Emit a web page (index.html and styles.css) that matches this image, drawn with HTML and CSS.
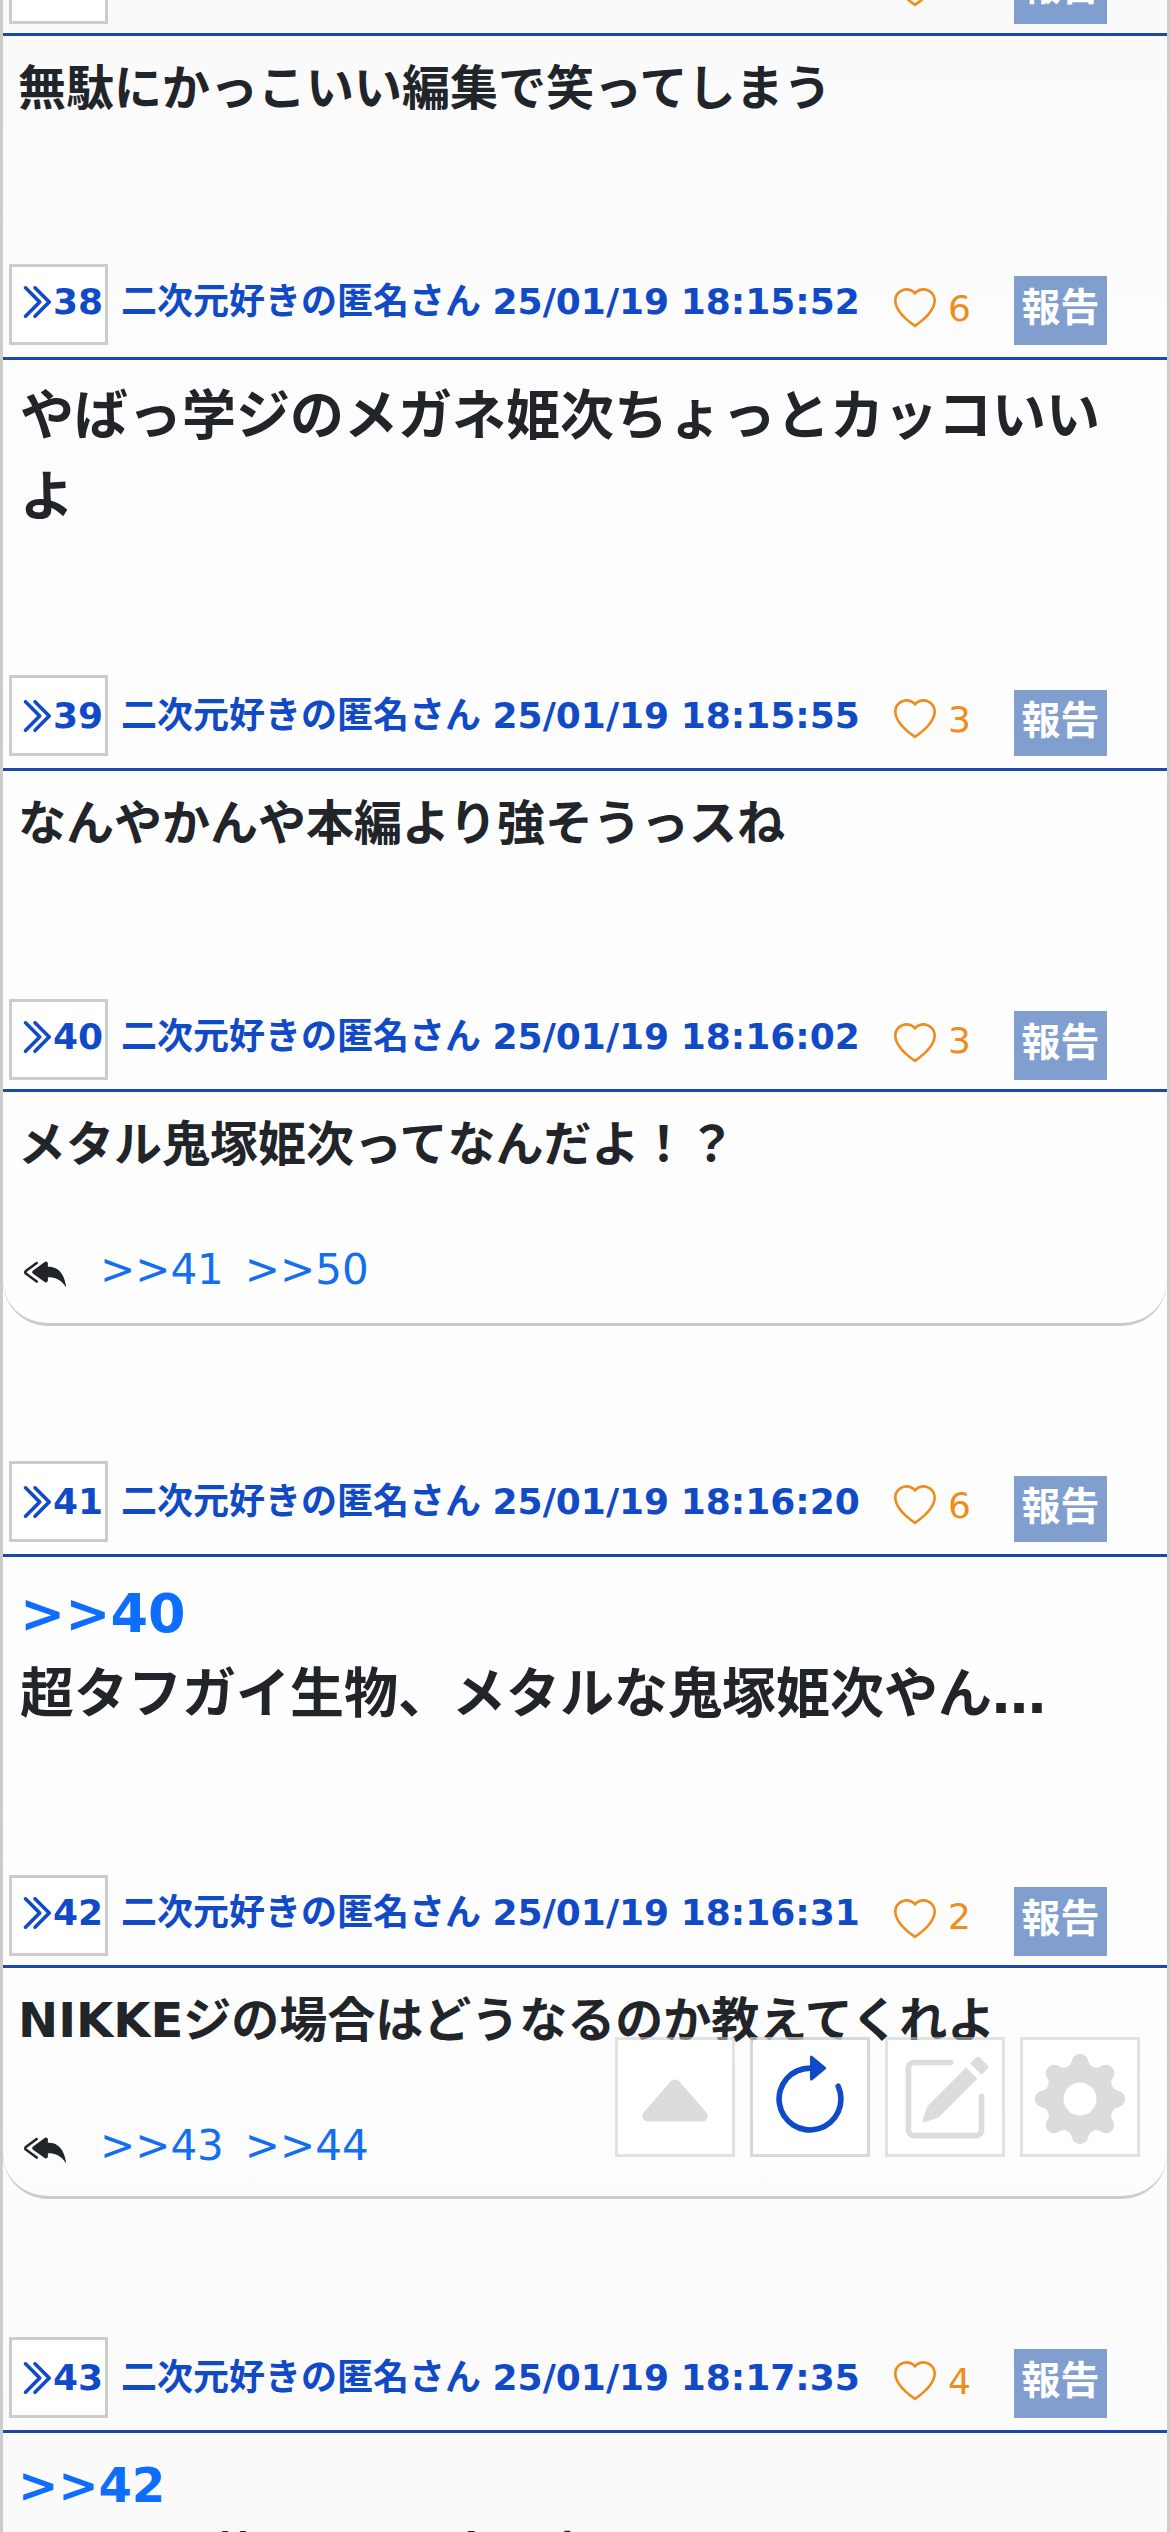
FILE: index.html
```html
<!DOCTYPE html>
<html lang="ja">
<head>
<meta charset="utf-8">
<title>スレッド</title>
<link rel="stylesheet" href="styles.css">
</head>
<body>
<svg class="sprite" aria-hidden="true">
  <symbol id="chevrons" viewBox="0 0 16 16"><path d="M3.646 1.646a.5.5 0 0 1 .708 0l6 6a.5.5 0 0 1 0 .708l-6 6a.5.5 0 0 1-.708-.708L9.293 8 3.646 2.354a.5.5 0 0 1 0-.708z"/><path d="M7.646 1.646a.5.5 0 0 1 .708 0l6 6a.5.5 0 0 1 0 .708l-6 6a.5.5 0 0 1-.708-.708L13.293 8 7.646 2.354a.5.5 0 0 1 0-.708z"/></symbol>
  <symbol id="heart" viewBox="0 0 16 16"><path d="m8 2.748-.717-.737C5.6.281 2.514.878 1.4 3.053c-.523 1.023-.641 2.5.314 4.385.92 1.815 2.834 3.989 6.286 6.357 3.452-2.368 5.365-4.542 6.286-6.357.955-1.886.838-3.362.314-4.385C13.486.878 10.4.28 8.717 2.01L8 2.748zM8 15C-7.333 4.868 3.279-3.04 7.824 1.143c.06.055.119.112.176.171a3.12 3.12 0 0 1 .176-.17C12.72-3.042 23.333 4.867 8 15z"/></symbol>
  <symbol id="reply" viewBox="0 0 16 16"><path d="M8.021 11.9 3.453 8.62a.719.719 0 0 1 0-1.238L8.021 4.1a.716.716 0 0 1 1.079.619V6c1.5 0 6 0 7 8-2.5-4.5-7-4-7-4v1.281c0 .56-.606.898-1.079.62z"/><path d="M5.232 4.293a.5.5 0 0 1-.106.7L1.114 7.945a.5.5 0 0 1-.042.028.147.147 0 0 0 0 .252.503.503 0 0 1 .042.028l4.012 2.954a.5.5 0 1 1-.593.805L.539 9.073a1.147 1.147 0 0 1 0-1.946l3.994-2.94a.5.5 0 0 1 .699.106z"/></symbol>
</svg>
<main class="thread">
  <article class="post">
    <header class="head compact">
      <a class="num"><svg><use href="#chevrons"/></svg>37</a>
      <span class="meta"></span>
      <span class="like"><svg><use href="#heart"/></svg></span>
      <span class="report">報告</span>
    </header>
    <p class="body">無駄にかっこいい編集で笑ってしまう</p>
  </article>
  <article class="post">
    <header class="head raised">
      <a class="num"><svg><use href="#chevrons"/></svg>38</a>
      <span class="meta">二次元好きの匿名さん 25/01/19 18:15:52</span>
      <span class="like"><svg><use href="#heart"/></svg>6</span>
      <span class="report">報告</span>
    </header>
    <p class="body large h315">やばっ学ジのメガネ姫次ちょっとカッコいいよ</p>
  </article>
  <article class="post">
    <header class="head short">
      <a class="num"><svg><use href="#chevrons"/></svg>39</a>
      <span class="meta">二次元好きの匿名さん 25/01/19 18:15:55</span>
      <span class="like"><svg><use href="#heart"/></svg>3</span>
      <span class="report">報告</span>
    </header>
    <p class="body">なんやかんや本編より強そうっスね</p>
  </article>
  <article class="post">
    <header class="head compact">
      <a class="num"><svg><use href="#chevrons"/></svg>40</a>
      <span class="meta">二次元好きの匿名さん 25/01/19 18:16:02</span>
      <span class="like"><svg><use href="#heart"/></svg>3</span>
      <span class="report">報告</span>
    </header>
    <div class="body card h234">
      <p>メタル鬼塚姫次ってなんだよ！？</p>
      <div class="replies"><svg><use href="#reply"/></svg><a>&gt;&gt;41</a><a>&gt;&gt;50</a></div>
    </div>
  </article>
  <article class="post">
    <header class="head short">
      <a class="num"><svg><use href="#chevrons"/></svg>41</a>
      <span class="meta">二次元好きの匿名さん 25/01/19 18:16:20</span>
      <span class="like"><svg><use href="#heart"/></svg>6</span>
      <span class="report">報告</span>
    </header>
    <p class="body large h318"><a>&gt;&gt;40</a><br>超タフガイ生物、メタルな鬼塚姫次やん…</p>
  </article>
  <article class="post">
    <header class="head compact">
      <a class="num"><svg><use href="#chevrons"/></svg>42</a>
      <span class="meta">二次元好きの匿名さん 25/01/19 18:16:31</span>
      <span class="like"><svg><use href="#heart"/></svg>2</span>
      <span class="report">報告</span>
    </header>
    <div class="body card h231">
      <p>NIKKEジの場合はどうなるのか教えてくれよ</p>
      <div class="replies"><svg><use href="#reply"/></svg><a>&gt;&gt;43</a><a>&gt;&gt;44</a></div>
    </div>
  </article>
  <article class="post">
    <header class="head">
      <a class="num"><svg><use href="#chevrons"/></svg>43</a>
      <span class="meta">二次元好きの匿名さん 25/01/19 18:17:35</span>
      <span class="like"><svg><use href="#heart"/></svg>4</span>
      <span class="report">報告</span>
    </header>
    <p class="body last"><a>&gt;&gt;42</a><br>これには革ジャン似合う方も</p>
  </article>
</main>
<nav class="tools">
  <button class="tool"><svg viewBox="0 0 16 16"><path d="m7.247 4.86-4.796 5.481c-.566.647-.106 1.659.753 1.659h9.592a1 1 0 0 0 .753-1.659l-4.796-5.48a1 1 0 0 0-1.506 0z"/></svg></button>
  <button class="tool active"><svg viewBox="0 0 16 16"><path d="M8 3a5 5 0 1 0 4.546 2.914.5.5 0 0 1 .908-.417A6 6 0 1 1 8 2v1z"/><path d="M8 4.466V.534a.25.25 0 0 1 .41-.192l2.36 1.966c.12.1.12.284 0 .384L8.41 4.658A.25.25 0 0 1 8 4.466z"/></svg></button>
  <button class="tool"><svg viewBox="0 0 16 16"><path d="M15.502 1.94a.5.5 0 0 1 0 .706L14.459 3.69l-2-2L13.502.646a.5.5 0 0 1 .707 0l1.293 1.293zm-1.75 2.456-2-2L4.939 9.21a.5.5 0 0 0-.121.196l-.805 2.414a.25.25 0 0 0 .316.316l2.414-.805a.5.5 0 0 0 .196-.12l6.813-6.814z"/><path d="M1 13.5A1.5 1.5 0 0 0 2.5 15h11a1.5 1.5 0 0 0 1.5-1.5v-6a.5.5 0 0 0-1 0v6a.5.5 0 0 1-.5.5h-11a.5.5 0 0 1-.5-.5v-11a.5.5 0 0 1 .5-.5H9a.5.5 0 0 0 0-1H2.5A1.5 1.5 0 0 0 1 2.5v11z"/></svg></button>
  <button class="tool"><svg viewBox="0 0 16 16"><path d="M9.405 1.05c-.413-1.4-2.397-1.4-2.81 0l-.1.34a1.464 1.464 0 0 1-2.105.872l-.31-.17c-1.283-.698-2.686.705-1.987 1.987l.169.311c.446.82.023 1.841-.872 2.105l-.34.1c-1.4.413-1.4 2.397 0 2.81l.34.1a1.464 1.464 0 0 1 .872 2.105l-.17.31c-.698 1.283.705 2.686 1.987 1.987l.311-.169a1.464 1.464 0 0 1 2.105.872l.1.34c.413 1.4 2.397 1.4 2.81 0l.1-.34a1.464 1.464 0 0 1 2.105-.872l.31.17c1.283.698 2.686-.705 1.987-1.987l-.169-.311a1.464 1.464 0 0 1 .872-2.105l.34-.1c1.4-.413 1.4-2.397 0-2.81l-.34-.1a1.464 1.464 0 0 1-.872-2.105l.17-.31c.698-1.283-.705-2.686-1.987-1.987l-.311.169a1.464 1.464 0 0 1-2.105-.872l-.1-.34zM8 10.93a2.929 2.929 0 1 1 0-5.86 2.929 2.929 0 0 1 0 5.858z"/></svg></button>
</nav>
</body>
</html>
```

FILE: styles.css
```css
* { box-sizing: border-box; margin: 0; padding: 0; }
html, body { height: 2532px; overflow: hidden; }
body {
  font-family: "DejaVu Sans", "Noto Sans CJK JP", sans-serif;
  color: #212529;
  background: #fefefe;
}
svg { fill: currentColor; flex: none; }
.sprite { display: none; }
.thread {
  height: 2532px;
  overflow: hidden;
  border: solid #ccc;
  border-width: 0 3px;
  background: linear-gradient(#fafafa, #fcfcfc 280px, #fdfdfd 500px, #fefefe 1000px, #fefefe 1700px, #fcfcfc 2200px, #fafafa);
}
.post:first-child { margin-top: -57px; }
.head {
  display: flex;
  align-items: flex-start;
  height: 96px;
  padding-left: 6px;
  border-bottom: 3px solid #1b49a7;
  color: #114ac6;
  font-size: 36px;
  line-height: 42px;
  white-space: nowrap;
}
.head.compact { height: 93px; }
.num {
  display: flex;
  width: 99px;
  height: 81px;
  padding: 17px 0 0 4px;
  border: 3px solid #ccc;
  background: #fff;
  font-weight: bold;
}
.num svg { width: 38px; height: 38px; margin: 2px -1px 0 0; stroke: currentColor; stroke-width: .5; }
.meta { width: 786px; padding: 20px 0 0 13px; font-weight: bold; word-spacing: -1px; }
.like { display: flex; gap: 12px; width: 120px; padding-top: 24px; color: #ee8d1b; }
.like svg { width: 42px; height: 42px; }
.raised .num, .compact .num { padding-top: 14px; }
.raised .meta, .compact .meta { padding-top: 17px; }
.compact .like { padding-top: 21px; }
.compact .like svg { margin-top: 3px; }
.report {
  width: 93px;
  height: 69px;
  margin-top: 12px;
  background: #809fcf;
  color: #fff;
  font-size: 39px;
  font-weight: bold;
  line-height: 63px;
  text-align: center;
}
.short .report { height: 66px; margin-top: 15px; line-height: 61px; }
.body {
  height: 228px;
  padding: 16px 48px 0 15px;
  font-size: 48px;
  font-weight: bold;
  line-height: 72px;
}
.large { padding-left: 17px; font-size: 54px; line-height: 81px; }
.last { padding-top: 17px; line-height: 70px; }
.h315 { height: 315px; }
.h318 { height: 318px; }
.h234 { height: 234px; margin-bottom: 135px; }
.h231 { height: 231px; margin-bottom: 138px; }
.body a { color: #0d6efd; }
.card { border-bottom: 3px solid #ccc; border-radius: 0 0 45px 45px; }
.replies {
  display: flex;
  gap: 21px;
  margin-top: 58px;
  padding-left: 6px;
  font-size: 42px;
  font-weight: normal;
  line-height: 63px;
}
.replies svg { width: 42px; height: 42px; margin: 13px 13px 0 0; }
.body .replies a { color: #146ff0; }
.tools { position: fixed; left: 615px; top: 2037px; display: flex; gap: 15px; }
.tool {
  display: grid;
  place-items: center;
  width: 120px;
  height: 120px;
  padding-top: 4px;
  border: 3px solid rgba(204, 204, 204, .55);
  background: #fff padding-box;
  color: #dcdcdc;
}
.tool svg { width: 90px; height: 90px; }
.tool.active { border-color: rgba(204, 204, 204, .75); color: #0f4ac8; }
```
